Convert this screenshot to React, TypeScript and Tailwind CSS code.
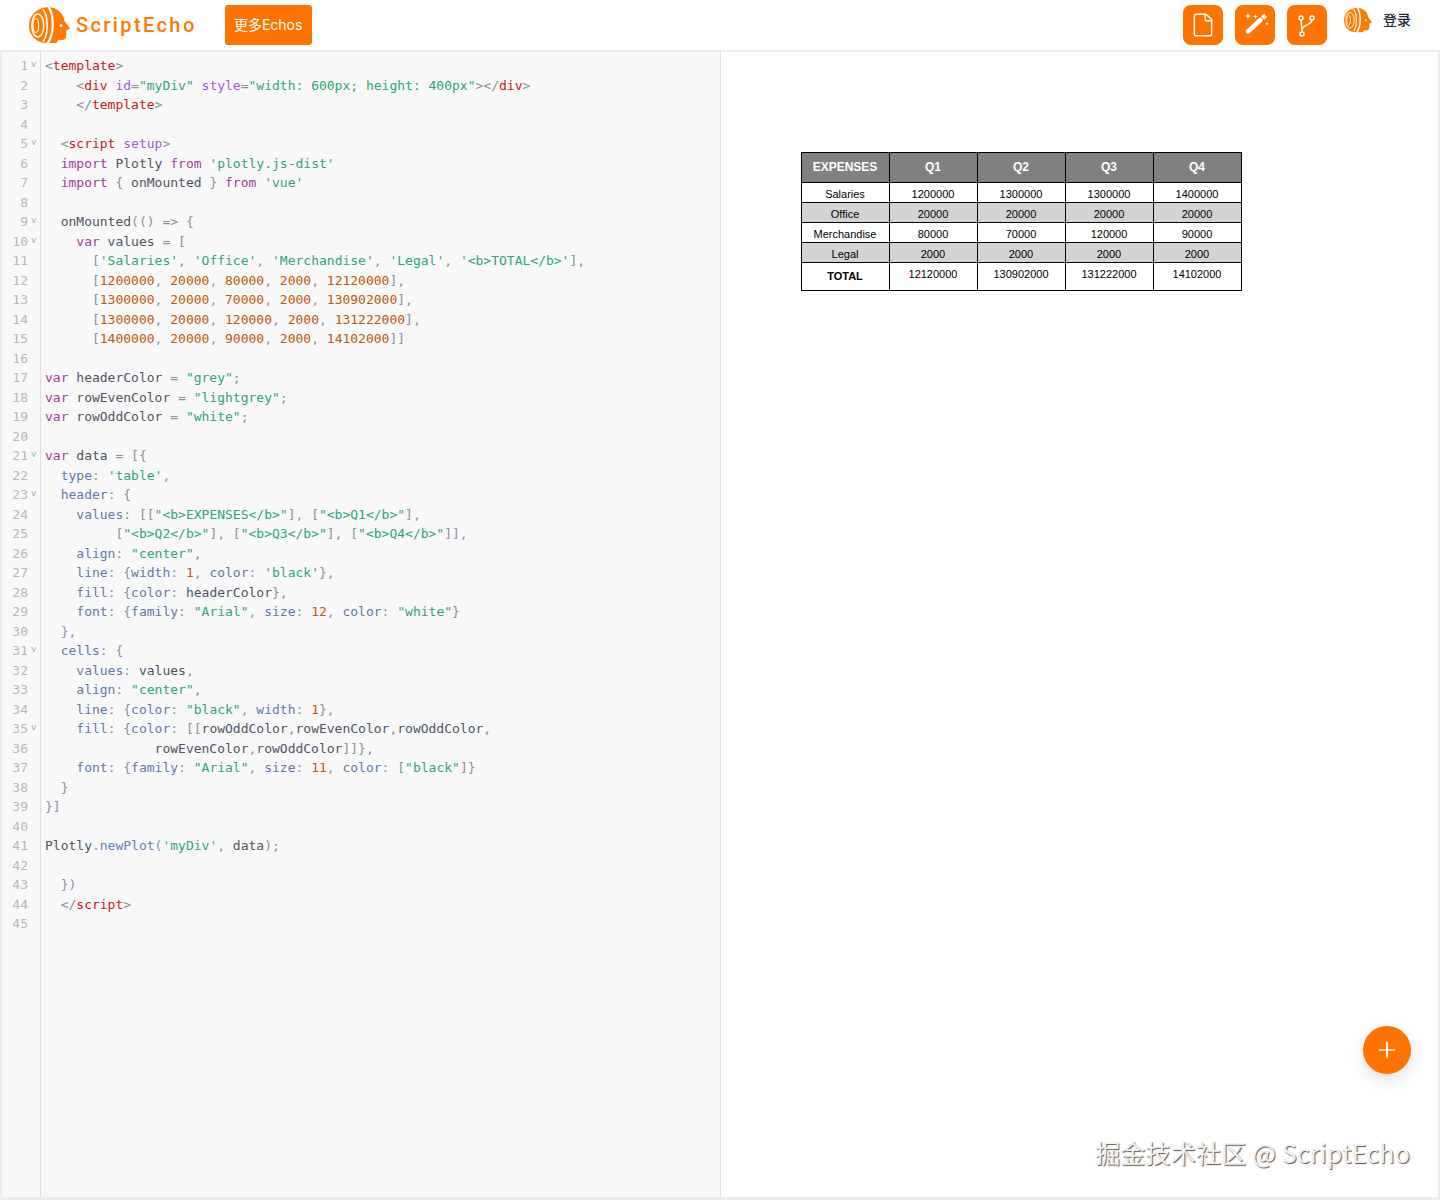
import { File, Plus } from "lucide-react";

const tokenColors: Record<string, string> = {
  p: "text-[#8a919e]", // punctuation
  t: "text-[#c8161d]", // tag name
  a: "text-[#a45ad0]", // attribute
  s: "text-[#2fa57a]", // string
  n: "text-[#c2570c]", // number
  k: "text-[#a23d9b]", // keyword
  f: "text-[#6278a8]", // property
  m: "text-[#5b83b8]", // method
};

// «x:text» marks a coloured token, everything else is the default colour
const code = [
  "«p:<»«t:template»«p:>»",
  "    «p:<»«t:div» «a:id»«p:=»«s:\"myDiv\"» «a:style»«p:=»«s:\"width: 600px; height: 400px\"»«p:></»«t:div»«p:>»",
  "    «p:</»«t:template»«p:>»",
  "",
  "  «p:<»«t:script» «a:setup»«p:>»",
  "  «k:import» Plotly «k:from» «s:'plotly.js-dist'»",
  "  «k:import» «p:{» onMounted «p:}» «k:from» «s:'vue'»",
  "",
  "  onMounted«p:(() => {»",
  "    «k:var» values «p:= [»",
  "      «p:[»«s:'Salaries'»«p:,» «s:'Office'»«p:,» «s:'Merchandise'»«p:,» «s:'Legal'»«p:,» «s:'<b>TOTAL</b>'»«p:],»",
  "      «p:[»«n:1200000»«p:,» «n:20000»«p:,» «n:80000»«p:,» «n:2000»«p:,» «n:12120000»«p:],»",
  "      «p:[»«n:1300000»«p:,» «n:20000»«p:,» «n:70000»«p:,» «n:2000»«p:,» «n:130902000»«p:],»",
  "      «p:[»«n:1300000»«p:,» «n:20000»«p:,» «n:120000»«p:,» «n:2000»«p:,» «n:131222000»«p:],»",
  "      «p:[»«n:1400000»«p:,» «n:20000»«p:,» «n:90000»«p:,» «n:2000»«p:,» «n:14102000»«p:]]»",
  "",
  "«k:var» headerColor «p:=» «s:\"grey\"»«p:;»",
  "«k:var» rowEvenColor «p:=» «s:\"lightgrey\"»«p:;»",
  "«k:var» rowOddColor «p:=» «s:\"white\"»«p:;»",
  "",
  "«k:var» data «p:= [{»",
  "  «f:type»«p::» «s:'table'»«p:,»",
  "  «f:header»«p:: {»",
  "    «f:values»«p:: [[»«s:\"<b>EXPENSES</b>\"»«p:],» «p:[»«s:\"<b>Q1</b>\"»«p:],»",
  "         «p:[»«s:\"<b>Q2</b>\"»«p:],» «p:[»«s:\"<b>Q3</b>\"»«p:],» «p:[»«s:\"<b>Q4</b>\"»«p:]],»",
  "    «f:align»«p::» «s:\"center\"»«p:,»",
  "    «f:line»«p:: {»«f:width»«p::» «n:1»«p:,» «f:color»«p::» «s:'black'»«p:},»",
  "    «f:fill»«p:: {»«f:color»«p::» headerColor«p:},»",
  "    «f:font»«p:: {»«f:family»«p::» «s:\"Arial\"»«p:,» «f:size»«p::» «n:12»«p:,» «f:color»«p::» «s:\"white\"»«p:}»",
  "  «p:},»",
  "  «f:cells»«p:: {»",
  "    «f:values»«p::» values«p:,»",
  "    «f:align»«p::» «s:\"center\"»«p:,»",
  "    «f:line»«p:: {»«f:color»«p::» «s:\"black\"»«p:,» «f:width»«p::» «n:1»«p:},»",
  "    «f:fill»«p:: {»«f:color»«p:: [[»rowOddColor«p:,»rowEvenColor«p:,»rowOddColor«p:,»",
  "              rowEvenColor«p:,»rowOddColor«p:]]},»",
  "    «f:font»«p:: {»«f:family»«p::» «s:\"Arial\"»«p:,» «f:size»«p::» «n:11»«p:,» «f:color»«p:: [»«s:\"black\"»«p:]}»",
  "  «p:}»",
  "«p:}]»",
  "",
  "Plotly«p:.»«m:newPlot»«p:(»«s:'myDiv'»«p:,» data«p:);»",
  "",
  "  «p:})»",
  "  «p:</»«t:script»«p:>»",
  "",
];

const foldLines = [1, 5, 9, 10, 21, 23, 31, 35];

const tableHead = ["EXPENSES", "Q1", "Q2", "Q3", "Q4"];
const tableRows = [
  ["Salaries", "1200000", "1300000", "1300000", "1400000"],
  ["Office", "20000", "20000", "20000", "20000"],
  ["Merchandise", "80000", "70000", "120000", "90000"],
  ["Legal", "2000", "2000", "2000", "2000"],
];
const totalRow = ["TOTAL", "12120000", "130902000", "131222000", "14102000"];

function CodeLine({ source }: { source: string }) {
  const parts = [...source.matchAll(/«(\w):([^»]*)»|([^«]+)/g)];
  return (
    <div className="h-[19.5px] whitespace-pre leading-[19.5px]">
      {parts.map((part, i) =>
        part[1] ? (
          <span key={i} className={tokenColors[part[1]]}>
            {part[2]}
          </span>
        ) : (
          <span key={i}>{part[3]}</span>
        )
      )}
    </div>
  );
}

function Logo({ className }: { className: string }) {
  return (
    <svg viewBox="0 0 41 36" className={className} fill="none">
      <path
        d="M19 0C29 0.5 34.5 6.5 35.5 14L41 21.5L37.2 23.5L37.2 29C37.2 32.8 33.5 33.6 29.5 32.8L27.5 36H17C7 36 0 28 0 18.5S7 1 19 0Z"
        fill="#ff7a00"
      />
      <path d="M19 -1C25.5 8 25.5 28 18 37" stroke="#fff" strokeWidth="2.2" />
      <path d="M14 2.5C19.5 9 19.5 28 14 34.5" stroke="#fff" strokeWidth="1.6" />
      <ellipse cx="8.8" cy="18.5" rx="6" ry="11.5" stroke="#fff" strokeWidth="1.4" />
      <ellipse cx="6.8" cy="18.5" rx="2.8" ry="7" stroke="#fff" strokeWidth="1.2" />
      <circle cx="32" cy="18.5" r="1.5" fill="#fff" />
    </svg>
  );
}

function WandIcon() {
  return (
    <svg viewBox="0 0 40 40" className="h-10 w-10" fill="none">
      <path d="M13 26.5 25.5 15" stroke="#fff" strokeWidth="4.6" strokeLinecap="round" />
      <path d="M27.6 13 30.6 10.3" stroke="#fff" strokeWidth="4.6" />
      <path
        d="M13 7.5l.8 2.7 2.7.8-2.7.8-.8 2.7-.8-2.7-2.7-.8 2.7-.8ZM20.5 9l.6 2 2 .6-2 .6-.6 2-.6-2-2-.6 2-.6ZM32 16.5l.5 1.7 1.7.5-1.7.5-.5 1.7-.5-1.7-1.7-.5 1.7-.5Z"
        fill="#fff"
      />
    </svg>
  );
}

function BranchIcon() {
  return (
    <svg viewBox="0 0 40 40" className="h-10 w-10" fill="none" stroke="#fff" strokeWidth="1.5">
      <circle cx="14" cy="13" r="2" />
      <circle cx="25" cy="13" r="2" />
      <circle cx="15" cy="29" r="2" />
      <path d="M14.2 15 15 27M25 15C25 20 15.5 19.5 14.8 25" />
    </svg>
  );
}

export default function App() {
  return (
    <div className="relative flex h-[1200px] flex-col overflow-hidden bg-white font-['Inter','Noto_Sans_CJK_SC',sans-serif]">
      <header className="flex h-[50px] shrink-0 items-center pl-[29px] pr-[29px]">
        <Logo className="h-9 w-[41px]" />
        <span className="ml-[6px] font-['Roboto',sans-serif] text-[20px] font-medium tracking-[2.4px] text-[#ff7a00]">
          ScriptEcho
        </span>
        <button className="ml-[28px] flex h-10 w-[87px] items-center justify-center rounded-[3px] bg-[#ff7300] text-sm text-white">
          更多Echos
        </button>
        <div className="ml-auto flex items-center gap-3">
          <button className="flex h-10 w-10 items-center justify-center rounded-lg bg-[#ff7300] text-white">
            <File size={26} strokeWidth={1.4} />
          </button>
          <button className="flex h-10 w-10 items-center justify-center rounded-lg bg-[#ff7300]">
            <WandIcon />
          </button>
          <button className="flex h-10 w-10 items-center justify-center rounded-lg bg-[#ff7300]">
            <BranchIcon />
          </button>
        </div>
        <Logo className="ml-[17px] mb-[10px] h-[30px] w-[28px]" />
        <span className="mb-[10px] ml-[11px] text-sm font-medium text-[#1f2937]">登录</span>
      </header>

      <main className="flex min-h-0 flex-1 border-x-2 border-t-2 border-b-[3px] border-[#ececec]">
        <section className="flex w-[718px] shrink-0 bg-[#f8f8f8] font-['DejaVu_Sans_Mono',monospace] text-[13px] text-[#4b5563]">
          <div className="w-[39px] shrink-0 border-r border-[#dcdcdc] pt-1 text-[#b4b9c0]">
            {code.map((_, i) => (
              <div key={i} className="flex h-[19.5px] leading-[19.5px]">
                <span className="w-[26px] text-right">{i + 1}</span>
                {foldLines.includes(i + 1) && (
                  <span className="ml-[3px] text-[9px] leading-[17px] text-[#a8adb5]">v</span>
                )}
              </div>
            ))}
          </div>
          <div className="pl-[4px] pt-1">
            {code.map((line, i) => (
              <CodeLine key={i} source={line} />
            ))}
          </div>
        </section>

        <section className="flex-1 border-l border-[#e2e2e2] pl-[80px] pt-[100px] font-['Liberation_Sans',Arial,sans-serif]">
          <table className="w-[441px] table-fixed border-collapse border border-black text-center text-[11px] text-black">
            <thead>
              <tr className="h-[30px] bg-[#808080] text-xs font-bold text-white">
                {tableHead.map((cell) => (
                  <th key={cell} className="border border-black p-0 pb-[2px] pr-[1px] font-bold">
                    {cell}
                  </th>
                ))}
              </tr>
            </thead>
            <tbody>
              {tableRows.map((row, i) => (
                <tr key={row[0]} className={i % 2 === 0 ? "h-5 bg-white" : "h-5 bg-[#d3d3d3]"}>
                  {row.map((cell, j) => (
                    <td key={j} className="border border-black p-0 pr-[1px] pt-[3px] leading-[16px]">
                      {cell}
                    </td>
                  ))}
                </tr>
              ))}
              <tr className="h-7 bg-white">
                {totalRow.map((cell, j) => (
                  <td
                    key={j}
                    className={
                      j === 0
                        ? "border border-black p-0 pr-[1px] text-[11px] font-bold"
                        : "border border-black p-0 pb-[4px] pr-[1px] text-[11px]"
                    }
                  >
                    {cell}
                  </td>
                ))}
              </tr>
            </tbody>
          </table>
        </section>
      </main>

      <button className="absolute left-[1363px] top-[1026px] flex h-12 w-12 items-center justify-center rounded-full bg-[#ff7300] text-white shadow-[0_6px_16px_rgba(0,0,0,0.12)]">
        <Plus size={26} strokeWidth={1.6} />
      </button>
      <div className="absolute right-[30px] top-[1133px] whitespace-nowrap font-['Noto_Sans_CJK_SC',sans-serif] text-[25px] leading-[38px] tracking-[0.2px] text-[#f2f2f2] [text-shadow:1px_1px_1px_#555]">
        掘金技术社区 @ ScriptEcho
      </div>
    </div>
  );
}
